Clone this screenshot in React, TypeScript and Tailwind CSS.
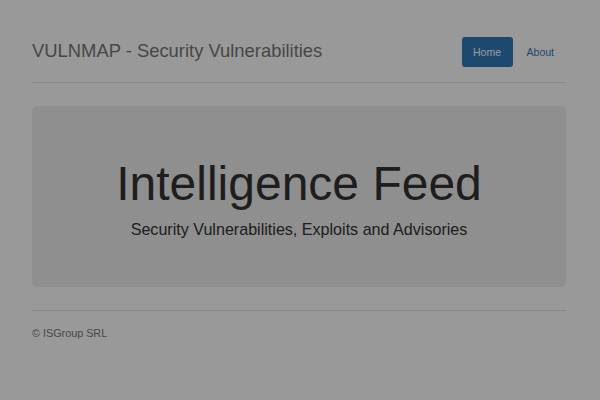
export default function App() {
  return (
    <div className="relative min-h-[400px] bg-white font-['Liberation_Sans',Arial,sans-serif] text-[#333]">
      <div className="ml-[32px] mr-[34px]">
        {/* Header */}
        <div className="flex items-center justify-between pt-[37px] pb-[15px] border-b border-[#e5e5e5]">
          <h3 className="pb-[2px] text-[18.4px] leading-[28px] text-[#777]">VULNMAP - Security Vulnerabilities</h3>
          <nav className="flex items-center gap-[2px] text-[10.5px] leading-[15px]">
            <a className="h-[30px] w-[51px] flex items-center justify-center rounded-[3px] bg-[#337ab7] text-white">
              Home
            </a>
            <a className="h-[30px] px-[12px] flex items-center text-[#337ab7]">About</a>
          </nav>
        </div>

        {/* Jumbotron */}
        <div className="mt-[23px] h-[181px] rounded-[5px] bg-[#eee] flex flex-col items-center pt-[52px]">
          <h1 className="text-[48px] leading-[52px]">Intelligence Feed</h1>
          <p className="mt-[8px] text-[16.1px] leading-[22px]">
            Security Vulnerabilities, Exploits and Advisories
          </p>
        </div>

        {/* Footer */}
        <div className="mt-[23px] border-t border-[#e5e5e5] pt-[15px]">
          <p className="text-[10.8px] leading-[15px] text-[#777]">© ISGroup SRL</p>
        </div>
      </div>

      {/* Modal backdrop */}
      <div className="fixed inset-0 bg-black/40" />
    </div>
  );
}
